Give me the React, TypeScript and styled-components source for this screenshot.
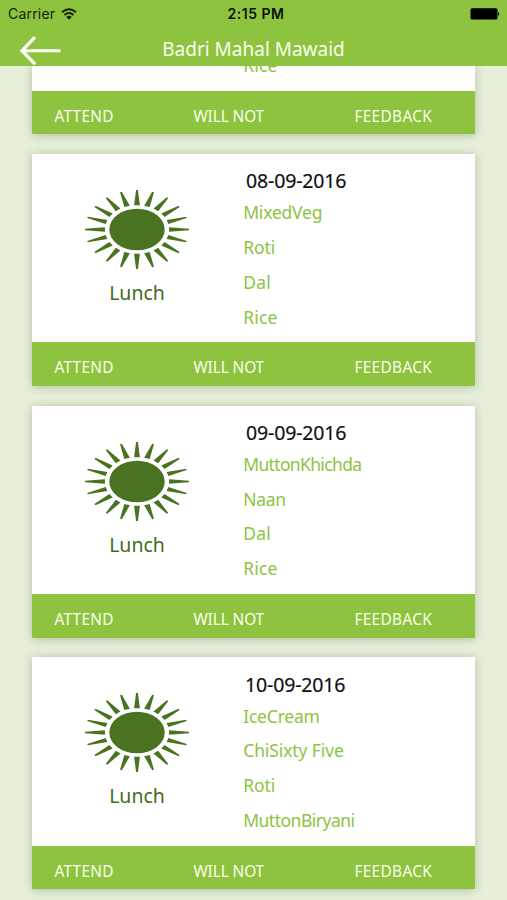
import React from "react";
import styled, { createGlobalStyle } from "styled-components";

const GREEN = "#8ec33f";
const LEAF = "#497320";

const GlobalStyle = createGlobalStyle`
  * { box-sizing: border-box; }
  body { margin: 0; background: #e6efd9; font-family: "Noto Sans", "Open Sans", sans-serif; }
`;

const Screen = styled.div`
  width: 507px;
  height: 900px;
  display: flex;
  flex-direction: column;
  overflow: hidden;
  background: #e6efd9;
`;

const Header = styled.header`
  flex: none;
  height: 66px;
  background: ${GREEN};
`;

const StatusBar = styled.div`
  height: 28px;
  padding: 0 7px 0 8px;
  display: grid;
  grid-template-columns: 1fr auto 1fr;
  align-items: center;
  font-family: Inter, sans-serif;
  font-size: 14px;
  line-height: 28px;
  color: #17210a;
`;

const Carrier = styled.div`
  display: flex;
  align-items: center;
  gap: 6px;
  letter-spacing: 0.2px;
`;

const Clock = styled.div`
  font-weight: 600;
  font-size: 14px;
  padding-left: 4px;
  letter-spacing: 0.5px;
  color: #0c1203;
`;

const BatteryIcon = styled.svg`
  justify-self: end;
`;

const NavBar = styled.div`
  height: 38px;
  display: grid;
  grid-template-columns: 63px 1fr 63px;
`;

const BackButton = styled.button`
  align-self: start;
  border: 0;
  padding: 8px 0 0 19px;
  background: none;
  line-height: 0;
  text-align: left;
`;

const Title = styled.h1`
  margin: 0;
  color: #fbfff0;
  font-weight: 400;
  font-size: 19px;
  line-height: 43px;
  text-align: center;
  white-space: nowrap;
`;

const Feed = styled.main`
  flex: 1;
  min-height: 0;
  overflow: hidden;
  display: flex;
  flex-direction: column;
  gap: 19.7px;
  padding: 0 32px;
`;

const Card = styled.article`
  flex: none;
  width: 443.4px;
  background: #fff;
  box-shadow: 0 1px 9px rgba(70, 80, 45, 0.32);
`;

const CardBody = styled.div<{ $scrolled?: boolean }>`
  height: ${(p) => (p.$scrolled ? "24.7px" : "188.5px")};
  display: grid;
  grid-template-columns: 210px 1fr;
  align-content: end;
  align-items: end;
  overflow: hidden;
`;

const Meal = styled.div`
  height: 188.5px;
  display: flex;
  flex-direction: column;
  align-items: center;
  padding-top: 35px;
`;

const MealName = styled.div`
  margin-top: 9px;
  font-size: 19.5px;
  line-height: 28px;
  color: #446b20;
`;

const Details = styled.div`
  padding-bottom: 8px;
`;

const DateText = styled.div<{ $shift: number }>`
  padding-left: ${(p) => 4 + p.$shift}px;
  font-size: 19.5px;
  line-height: 34px;
  height: 31px;
  color: #111;
  -webkit-text-stroke: 0.2px #111;
  letter-spacing: -0.15px;
`;

const Dish = styled.div<{ $track: number }>`
  height: 34.8px;
  line-height: 34.4px;
  padding-left: 1.2px;
  font-size: 17.5px;
  color: ${GREEN};
  white-space: nowrap;
  letter-spacing: ${(p) => p.$track}px;
`;

const Actions = styled.div`
  height: 43.5px;
  display: grid;
  grid-template-columns: 139px 161px 1fr;
  padding-left: 22.4px;
  background: ${GREEN};
`;

const Action = styled.button<{ $track: number }>`
  padding: 0;
  border: 0;
  background: none;
  text-align: left;
  font-family: inherit;
  font-size: 15.4px;
  line-height: 51px;
  height: 43px;
  color: #f9ffec;
  white-space: nowrap;
  letter-spacing: ${(p) => p.$track}px;
`;

const rays = Array.from({ length: 20 }, (_, i) => i * 18);

const Sun = () => (
  <svg width="106" height="81" viewBox="-53 -40.5 106 81">
    <ellipse rx="27.7" ry="20.8" fill={LEAF} />
    <g transform="scale(1.32 1)" fill={LEAF}>
      {rays.map((a) => (
        <path key={a} d="M-2.2 -24.3 L-0.7 -39.4 L0.7 -39.4 L2.2 -24.3Z" transform={`rotate(${a})`} />
      ))}
    </g>
  </svg>
);

const Wifi = () => (
  <svg width="16" height="12" viewBox="0 0 16 12">
    <g fill="none" stroke="#17210a" strokeWidth="1.9">
      <path d="M1 4.3 Q8 -1.8 15 4.3" />
      <path d="M3.4 7 Q8 3.1 12.6 7" />
    </g>
    <path d="M5.2 8.9 Q8 6.5 10.8 8.9 L8 11.8Z" fill="#17210a" />
  </svg>
);

const Battery = () => (
  <BatteryIcon width="30" height="12" viewBox="0 0 30 12">
    <rect x="0.5" y="0.3" width="27" height="11.2" rx="1.6" fill="#000" />
    <path d="M28 4 Q30.6 5.9 28 7.8Z" fill="#000" />
  </BatteryIcon>
);

const BackArrow = () => (
  <svg width="43" height="30" viewBox="0 0 43 30" fill="none" stroke="#fdfff5">
    <path d="M3 14.7 H41.5" strokeWidth="2.9" />
    <path d="M16 1.2 L3 14.7 L16 28.2" strokeWidth="3.3" />
  </svg>
);

type Entry = [string, number];
interface Menu {
  date?: string;
  shift?: number;
  dishes: Entry[];
}

const menus: Menu[] = [
  { dishes: [["Rice", 0.2]] },
  { date: "08-09-2016", dishes: [["MixedVeg", -0.2], ["Roti", -0.1], ["Dal", 0.2], ["Rice", 0.2]] },
  { date: "09-09-2016", dishes: [["MuttonKhichda", -0.65], ["Naan", -0.3], ["Dal", 0.2], ["Rice", 0.2]] },
  {
    date: "10-09-2016",
    shift: -1,
    dishes: [["IceCream", -0.2], ["ChiSixty Five", -0.1], ["Roti", -0.1], ["MuttonBiryani", -0.5]],
  },
];

const MenuCard = ({ menu }: { menu: Menu }) => (
  <Card>
    <CardBody $scrolled={!menu.date}>
      {menu.date ? (
        <Meal>
          <Sun />
          <MealName>Lunch</MealName>
        </Meal>
      ) : (
        <span />
      )}
      <Details>
        {menu.date && <DateText $shift={menu.shift ?? 0}>{menu.date}</DateText>}
        {menu.dishes.map(([name, track]) => (
          <Dish key={name} $track={track}>
            {name}
          </Dish>
        ))}
      </Details>
    </CardBody>
    <Actions>
      <Action $track={0.3}>ATTEND</Action>
      <Action $track={-0.1}>WILL NOT</Action>
      <Action $track={0.33}>FEEDBACK</Action>
    </Actions>
  </Card>
);

export default function App() {
  return (
    <>
      <GlobalStyle />
      <Screen>
        <Header>
          <StatusBar>
            <Carrier>
              Carrier
              <Wifi />
            </Carrier>
            <Clock>2:15 PM</Clock>
            <Battery />
          </StatusBar>
          <NavBar>
            <BackButton aria-label="Back">
              <BackArrow />
            </BackButton>
            <Title>Badri Mahal Mawaid</Title>
          </NavBar>
        </Header>
        <Feed>
          {menus.map((menu, i) => (
            <MenuCard key={i} menu={menu} />
          ))}
        </Feed>
      </Screen>
    </>
  );
}
